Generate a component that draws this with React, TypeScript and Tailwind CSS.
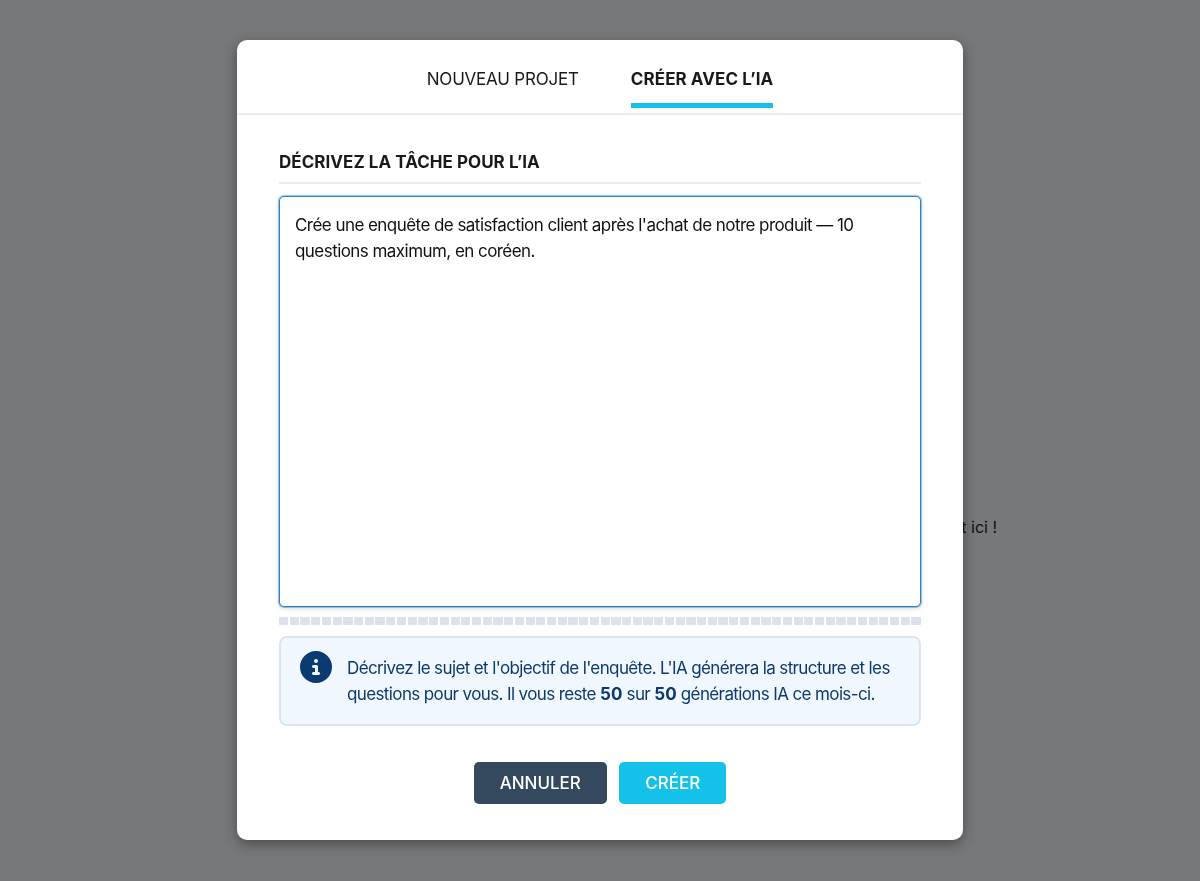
import { FaCircleInfo } from 'react-icons/fa6';

const segments = Array.from({ length: 60 }, (_, i) => i);

export default function App() {
  return (
    <div className="relative h-[881px] overflow-hidden bg-white font-['Inter',sans-serif] text-[#111]">
      {/* Page behind the modal */}
      <div className="pt-[517px] pr-[203px] text-right text-base leading-5">Le projet apparaît ici !</div>

      {/* Backdrop */}
      <div className="fixed inset-0 flex items-start justify-center bg-[#0d0f12]/[0.56] pt-10">
        <div className="flex h-[800px] w-[726px] flex-col rounded-[10px] bg-white shadow-[0_4px_14px_rgba(0,0,0,0.4)]">
          {/* Tabs */}
          <div className="flex h-[75px] shrink-0 justify-center gap-[52px] border-b-2 border-[#e9ecf2] pt-[28px]">
            <div className="text-[17px] leading-[22px] tracking-[-0.2px] text-[#1a1a1a]">NOUVEAU PROJET</div>
            <div className="flex h-[40px] flex-col justify-between border-b-[5px] border-[#14c1e8] text-[17px] font-bold leading-[22px] tracking-[0.07px] text-[#1a1a1a]">
              CRÉER AVEC L’IA
            </div>
          </div>

          <div className="flex flex-1 flex-col px-[42px] pt-[36px]">
            <div className="border-b-2 border-[#e9ecf2] pb-[9px] text-[17px] font-bold leading-[22px] tracking-[0.04px] text-[#1a1a1a]">
              DÉCRIVEZ LA TÂCHE POUR L’IA
            </div>

            <div className="mt-[12px] h-[411px] rounded-[5px] border border-[#2a84c8] bg-white px-[15px] py-[15px] text-[17px] leading-[26px] tracking-[-0.55px] text-[#111] shadow-[0_0_0_1px_rgba(42,132,200,0.4),0_1px_5px_rgba(0,0,0,0.18)]">
              Crée une enquête de satisfaction client après l'achat de notre produit — 10 questions maximum, en coréen.
            </div>

            <div className="mt-[10px] flex h-2 gap-[1.5px]">
              {segments.map(i => (
                <span key={i} className="flex-1 rounded-[1px] bg-[#dce1ea]" />
              ))}
            </div>

            <div className="mt-[11px] flex h-[90px] gap-[15px] rounded-[8px] border-2 border-[#d9e5f2] bg-[#f1f7fe] px-[19px] pt-[13px] text-[#0d3a6e]">
              <FaCircleInfo className="shrink-0 text-[32px] text-[#0a3a70]" />
              <p className="mt-1 text-[17px] leading-[26px] tracking-[-0.62px]">
                Décrivez le sujet et l'objectif de l'enquête. L'IA générera la structure et les questions pour vous. Il vous reste <b className="tracking-normal">50</b> sur <b className="tracking-normal">50</b> générations IA ce mois-ci.
              </p>
            </div>

            <div className="mt-[36px] flex justify-center gap-[12.5px]">
              <button className="h-[42px] w-[133px] rounded-[5px] bg-[#34495e] pt-px text-[17px] font-medium text-white">ANNULER</button>
              <button className="h-[42px] w-[107px] rounded-[5px] bg-[#14c1e8] pt-px text-[17px] font-medium text-white">CRÉER</button>
            </div>
          </div>
        </div>
      </div>
    </div>
  );
}
